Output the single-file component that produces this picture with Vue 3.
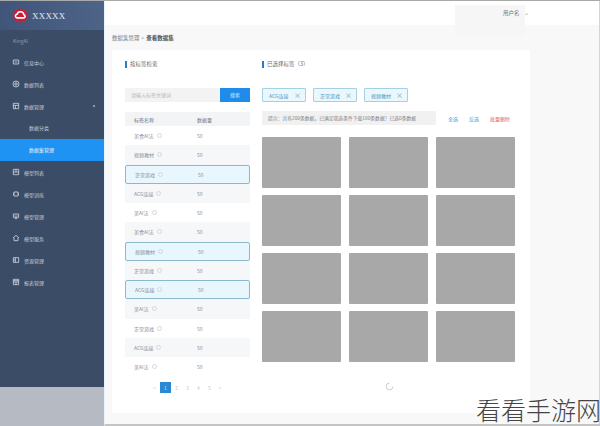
<script setup>
const icons = {
  info: 'M2 3h8v6H2z M4 6h4',
  list: 'M6 1.5a4.5 4.5 0 1 0 0 9a4.5 4.5 0 1 0 0-9z M3 6h6 M6 3v6',
  data: 'M2 2h8v8H2z M2 5h8 M5 5v5',
  grid: 'M2 2h8v8H2z M2 6h8 M6 2v4',
  train: 'M3 3h6v6H3z M1.5 5h1.5 M1.5 7h1.5 M9 5h1.5 M9 7h1.5',
  serve: 'M2 3h8v5H2z M4 10h4 M4 5.5l2 1l2-1',
  rec: 'M1.5 6L6 2l4.5 4 M3 5.5V10h6V5.5',
  res: 'M2 2.5h8v7H2z M5 2.5v7 M2.5 6H5',
  rep: 'M2 2h8v8H2z M2 6h8 M2 4h8 M6 6v4'
}
const nav1 = [
  { label: '信息中心', icon: 'info' },
  { label: '数据列表', icon: 'list' },
  { label: '数据管理', icon: 'data', open: true }
]
const nav2 = [
  { label: '模型列表', icon: 'grid' },
  { label: '模型训练', icon: 'train' },
  { label: '模型管理', icon: 'serve' },
  { label: '模型服务', icon: 'rec' },
  { label: '资源管理', icon: 'res' },
  { label: '报表管理', icon: 'rep' }
]
const rows = [
  ['美食AI法', ''], ['视频教材', 'alt'], ['正常游戏', 'sel'], ['ACG连接', 'alt'], ['美AI法', ''],
  ['美食AI法', 'alt'], ['视频教材', 'sel'], ['正常游戏', 'alt'], ['ACG连接', 'sel'], ['美AI法', 'alt'],
  ['正常游戏', ''], ['ACG连接', 'alt'], ['美AI法', '']
]
const tags = ['ACG连接', '正常游戏', '视频教材']
const pages = ['<', '1', '2', '3', '4', '5', '>']
</script>

<template>
  <div class="page">
    <aside class="side">
      <div class="brand">
        <svg class="logo" viewBox="0 0 16 16">
          <circle cx="8" cy="8" r="7.5" fill="#c4223a" />
          <path d="M4 10.5a2 2 0 0 1 .3-3.9a3.8 3.8 0 0 1 7.3.5a1.8 1.8 0 0 1 .2 3.4z" fill="none" stroke="#fff" stroke-width="1.7" />
        </svg>
        <span class="brand-name">XXXXX</span>
      </div>
      <div class="group-title">KingAI</div>
      <div v-for="n in nav1" :key="n.label" class="nav">
        <svg class="ico" viewBox="0 0 12 12"><path :d="icons[n.icon]" /></svg>
        <span>{{ n.label }}</span>
        <i v-if="n.open" class="dot"></i>
      </div>
      <div class="sub">数据分类</div>
      <div class="sub active">数据集管理</div>
      <div v-for="n in nav2" :key="n.label" class="nav">
        <svg class="ico" viewBox="0 0 12 12"><path :d="icons[n.icon]" /></svg>
        <span>{{ n.label }}</span>
      </div>
      <div class="side-foot"></div>
    </aside>

    <div class="main">
      <header class="top">
        <div class="user-box"><span class="uname">用户名</span><span class="caret">⌄</span></div>
      </header>
      <div class="content">
        <div class="crumbs"><span>数据集管理</span><b class="sep">&gt;</b><strong>查看数据集</strong></div>
        <section class="card">
          <div class="left">
            <h3 class="title">按标签检索</h3>
            <div class="search">
              <div class="input">请输入标签关键词</div>
              <div class="btn">搜索</div>
            </div>
            <div class="thead"><span>标签名称</span><span>数据量</span></div>
            <div v-for="(r, i) in rows" :key="i" class="row" :class="r[1]">
              <span class="name">{{ r[0] }}<i class="ring"></i></span><span>50</span>
            </div>
            <div class="pager">
              <span v-for="p in pages" :key="p" class="pg" :class="{ on: p === '1' }">{{ p }}</span>
            </div>
          </div>
          <div class="right">
            <h3 class="title">已选择标签（3）</h3>
            <div class="tags">
              <span v-for="t in tags" :key="t" class="tag">{{ t }}<em>×</em></span>
            </div>
            <div class="tipline">
              <div class="tip">提示：共有200条数据，已满足筛选条件下载100条数据！已选0条数据</div>
              <div class="links"><a>全选</a><a>反选</a><a class="red">批量删除</a></div>
            </div>
            <div class="thumbs">
              <div v-for="n in 12" :key="n" class="thumb"></div>
            </div>
            <div class="loader">
              <svg viewBox="0 0 12 12" class="spin"><path d="M6 1.5a4.5 4.5 0 1 0 4.5 4.5" /></svg>
            </div>
          </div>
        </section>
      </div>
    </div>
    <div class="mark">看看手游网</div>
  </div>
</template>

<style>
html, body { margin: 0; background: #fff; }
</style>

<style scoped>
.page {
  position: relative;
  width: 600px;
  height: 426px;
  display: flex;
  overflow: hidden;
  border-top: 1px solid #a9a9a9;
  box-sizing: border-box;
  font-family: "Noto Sans CJK SC", "Liberation Sans", sans-serif;
  font-size: 5px;
  color: #8c929c;
  background: #fff;
}
.side {
  width: 104px;
  flex: none;
  display: flex;
  flex-direction: column;
  background: #3b4c66;
  color: #c3cad6;
}
.brand {
  height: 29px;
  display: flex;
  align-items: center;
  gap: 4px;
  padding-left: 13px;
  background: linear-gradient(90deg, #41557a, #4d6387);
}
.logo { width: 15px; height: 15px; }
.brand-name { font: 9px "Liberation Serif", serif; color: #e6ebf4; letter-spacing: .2px; }
.group-title { height: 21px; line-height: 21px; padding-left: 13px; color: #8f9bb0; }
.nav {
  height: 22px;
  flex: none;
  display: flex;
  align-items: center;
  gap: 4px;
  padding-left: 12px;
  position: relative;
}
.ico { width: 8px; height: 8px; fill: none; stroke: #d5dae3; stroke-width: 1.2; }
.dot {
  position: absolute;
  right: 9px;
  top: 10px;
  width: 2px;
  height: 2px;
  background: #aab3c2;
  border-radius: 50%;
}
.sub {
  height: 22px;
  flex: none;
  line-height: 22px;
  padding-left: 29px;
}
.sub.active { background: #1f93f3; color: #e8f4ff; }
.side-foot { margin-top: auto; height: 39px; background: #b6bbc3; }
.main {
  flex: 1;
  min-width: 0;
  display: flex;
  flex-direction: column;
  border-left: 1px solid #e9f3fb;
  border-bottom: 2px solid #c4c4c4;
}
.top {
  height: 24px;
  flex: none;
  display: flex;
  justify-content: flex-end;
  padding-right: 74px;
  box-sizing: border-box;
  border-right: 1px solid #d4d4d4;
}
.user-box {
  width: 70px;
  height: 30px;
  margin-top: 4px;
  background: #f6f6f6;
  box-sizing: border-box;
  padding: 4px 0 0 48px;
  color: #6d7078;
  font-size: 5.5px;
  display: flex;
  gap: 4px;
  position: relative;
  z-index: 1;
}
.uname { white-space: nowrap; }
.caret { color: #9a9da3; }
.content {
  flex: 1;
  background: #f8f8f8;
  padding: 0 69px 11px 7px;
  border-right: 1px solid #d4d4d4;
  display: flex;
  flex-direction: column;
}
.crumbs {
  height: 25px;
  flex: none;
  display: flex;
  align-items: center;
  gap: 2px;
  font-size: 5.5px;
  color: #7a7e86;
}
.crumbs strong { color: #4c5058; font-weight: 700; }
.sep { font-weight: 400; font-size: 5px; }
.card {
  flex: 1;
  background: #fff;
  display: flex;
  padding: 0 13px;
  gap: 12px;
}
.left { width: 125px; flex: none; }
.right { flex: 1; min-width: 0; }
.title {
  margin: 0;
  height: 29px;
  padding-bottom: 1px;
  box-sizing: border-box;
  font-size: 5.5px;
  line-height: 8px;
  font-weight: 400;
  color: #656a73;
  display: flex;
  align-items: center;
  gap: 3px;
}
.title::before { content: ""; width: 2px; height: 7px; background: #1f7fc9; }
.search { margin-top: 9px; display: flex; height: 14px; }
.input {
  flex: 1;
  background: #f3f3f4;
  color: #b4b7bc;
  line-height: 14px;
  padding-left: 6px;
}
.btn {
  width: 30px;
  background: #1f8ceb;
  color: #dcefff;
  text-align: center;
  line-height: 14px;
}
.thead, .row {
  display: grid;
  grid-template-columns: 63px 1fr;
  align-items: center;
  padding-left: 9px;
  box-sizing: border-box;
}
.thead { margin-top: 10px; height: 14px; background: #f3f4f6; color: #6f747d; }
.row { height: 19.25px; }
.row.alt { background: #f6f7f9; }
.row.sel {
  background: #e8f6fe;
  border: 1px solid #8cb8cb;
  border-radius: 2px;
}
.name { display: flex; align-items: center; gap: 3px; }
.ring { width: 3px; height: 3px; border: 1px solid #d5d7da; border-radius: 50%; }
.pager {
  margin-top: 6px;
  display: flex;
  justify-content: center;
}
.pg {
  width: 11px;
  height: 11px;
  line-height: 11px;
  text-align: center;
  color: #c3c7cc;
}
.pg.on { background: #2a89d2; color: #cfe8fb; }
.tags { margin-top: 9px; display: flex; gap: 7px; height: 14px; }
.tag {
  width: 44px;
  box-sizing: border-box;
  border: 1px solid #a5cfe2;
  background: #eaf7fd;
  border-radius: 1px;
  color: #4f9bc4;
  padding: 0 4px 0 6px;
  display: flex;
  justify-content: space-between;
  align-items: center;
}
.tag em { font-style: normal; font-size: 7px; color: #6b94ad; }
.tipline { margin-top: 9px; display: flex; align-items: center; }
.tip {
  width: 174px;
  height: 14px;
  line-height: 14px;
  background: #f1f1f2;
  color: #7b7e84;
  padding-left: 6px;
  box-sizing: border-box;
  white-space: nowrap;
  overflow: hidden;
  font-size: 4.8px;
}
.links { margin-left: 12px; display: flex; gap: 11px; color: #3a97d8; }
.links .red { color: #e4605a; }
.thumbs {
  margin-top: 12px;
  display: grid;
  grid-template-columns: repeat(3, 79px);
  grid-auto-rows: 51px;
  column-gap: 8px;
  row-gap: 7px;
}
.thumb { background: #a8a8a8; border-radius: 1px; }
.loader { margin-top: 20px; padding-left: 123px; }
.spin { width: 9px; height: 9px; display: block; fill: none; stroke: #b9bcc0; stroke-width: 1; }
.mark {
  position: absolute;
  right: -1px;
  bottom: 2px;
  font-size: 25px;
  line-height: 30px;
  font-weight: 300;
  color: #444;
  padding-left: 2px;
  z-index: 2;
}
</style>
